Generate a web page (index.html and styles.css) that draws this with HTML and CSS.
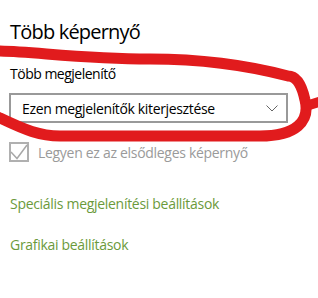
FILE: index.html
```html
<!DOCTYPE html>
<html lang="hu">
<head>
  <meta charset="UTF-8" />
  <title>Több képernyő</title>
  <link rel="stylesheet" href="styles.css">
</head>
<body>

  <div class="settings">
    <h2 class="title">Több képernyő</h2>

    <div class="label">Több megjelenítő</div>
    <div class="select">
      <span>Ezen megjelenítők kiterjesztése</span>
      <svg class="chevron" width="12" height="7" viewBox="0 0 12 7">
        <polyline points="0.5,0.5 6,6 11.5,0.5" fill="none" stroke="#666" stroke-width="1"/>
      </svg>
    </div>

    <label class="check">
      <span class="box">
        <svg width="20" height="20" viewBox="0 0 20 20">
          <polyline points="2,10 8,16.5 18,3" fill="none" stroke="#a8a8a8" stroke-width="1.5"/>
        </svg>
      </span>
      Legyen ez az elsődleges képernyő
    </label>

    <a class="link first" href="#">Speciális megjelenítési beállítások</a>
    <a class="link" href="#">Grafikai beállítások</a>
  </div>

  <!-- red marker drawn over the screenshot -->
  <svg class="scribble" width="318" height="298" viewBox="0 0 318 298">
    <path d="M -5 51 C 30 51, 80 59, 150 59 C 200 59, 250 66, 288 76 C 297 76, 302 86, 305 100 C 308 112, 305 120, 298 126 C 291 132, 280 136, 260 136 L 60 136 C 40 136, 25 130, 0 118 L -5 116"
          fill="none" stroke="#e11b1d" stroke-width="11" stroke-linecap="round" stroke-linejoin="round"/>
    <path d="M 306 106 L 322 101" fill="none" stroke="#e11b1d" stroke-width="10" stroke-linecap="round"/>
  </svg>

</body>
</html>
```

FILE: styles.css
```css
body {
  margin: 0;
  background: white;
  font-family: "Open Sans", "Noto Sans", sans-serif;
  color: #000;
}
.settings {
  padding: 18px 0 0 10px;
}
.title {
  margin: 0;
  font-size: 20px;
  font-weight: 400;
  line-height: 28px;
  letter-spacing: -0.8px;
}
.label {
  margin-top: 18px;
  font-size: 14px;
  line-height: 20px;
  letter-spacing: -0.5px;
}
.select {
  box-sizing: border-box;
  width: 279px;
  height: 30px;
  margin-top: 9px;
  margin-left: -1px;
  border: 2px solid #999;
  display: flex;
  align-items: center;
  justify-content: space-between;
  padding: 0 8px 0 11px;
  font-size: 14px;
  letter-spacing: -0.35px;
}
.chevron {
  display: block;
}
.check {
  display: flex;
  align-items: center;
  gap: 9px;
  margin-top: 19px;
  margin-left: -1px;
  font-size: 14px;
  letter-spacing: -0.3px;
  color: #9a9a9a;
}
.box {
  box-sizing: border-box;
  width: 20px;
  height: 20px;
  border: 2px solid #b0b0b0;
  position: relative;
}
.box svg {
  position: absolute;
  left: -2px;
  top: -2px;
}
.link {
  display: block;
  font-size: 14px;
  line-height: 20px;
  letter-spacing: -0.3px;
  color: #6b9a3b;
  text-decoration: none;
}
.link.first {
  margin-top: 32px;
}
.link + .link {
  margin-top: 21px;
}
.scribble {
  position: absolute;
  left: 0;
  top: 0;
  pointer-events: none;
}
```
